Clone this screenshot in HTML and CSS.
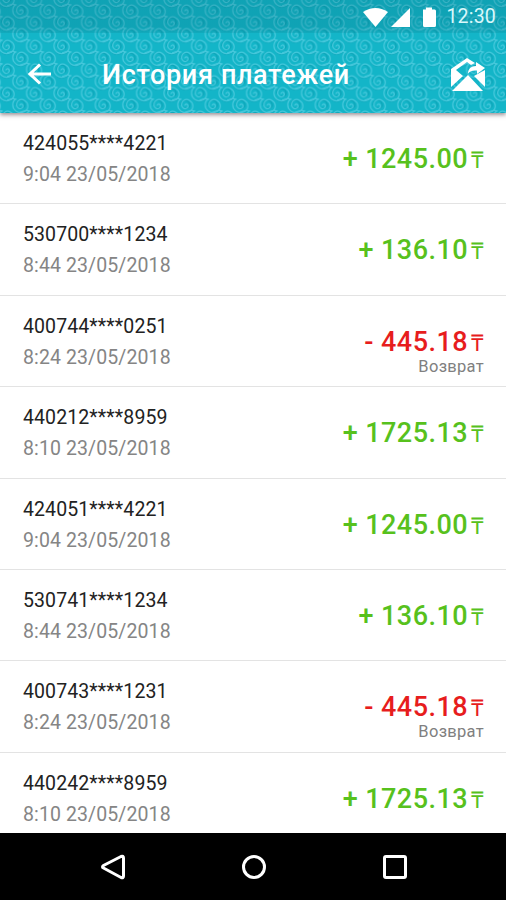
FILE: index.html
```html
<!DOCTYPE html>
<html lang="ru">
<head>
	<meta charset="UTF-8">
	<title>История платежей</title>
	<link rel="stylesheet" href="styles.css">
</head>
<body>
	<div class="phone">
		<header class="header">
			<svg class="header-pattern" width="506" height="113">
				<defs>
					<pattern id="waves" x="7" y="-1" width="27.5" height="23.6" patternUnits="userSpaceOnUse">
						<g fill="none" stroke="#0a9cb0" stroke-width="1.4">
							<path id="shade" d="M-5 0 C-5 -7 4 -6 4 0 C4 3 0 4 -1 2 M-7 4 C-4 9 2 9 7 5"/>
							<use href="#shade" x="27.5"/>
							<use href="#shade" y="23.6"/>
							<use href="#shade" x="27.5" y="23.6"/>
							<use href="#shade" x="13.75" y="11.8"/>
						</g>
						<g fill="none" stroke="#6bd6ea" stroke-width="1.2" stroke-linecap="round">
							<path id="curl" d="M-1 0 C1 -3 4 1 1 3 C-3 5 -6 0 -3 -4 C1 -8 8 -4 7 2 C6 7 -1 9 -5 6 C-9 3 -9 -4 -5 -6 C-9 -8 -12 -5 -14 -5"/>
							<use href="#curl" x="27.5"/>
							<use href="#curl" y="23.6"/>
							<use href="#curl" x="27.5" y="23.6"/>
							<use href="#curl" x="13.75" y="11.8"/>
						</g>
					</pattern>
				</defs>
				<rect width="506" height="113" fill="url(#waves)"/>
			</svg>
			<div class="status">
				<svg class="status-icons" width="76" height="22" viewBox="0 0 76 22" fill="#fff">
					<path d="M0 5 Q12.500 -3 25 5 L12.500 20Z"/>
					<path d="M47 1V20H28Z"/>
					<path d="M60 2.500H63V.5H69V2.500H71.500Q73 2.500 73 4V18.500Q73 20 71.500 20H61.500Q60 20 60 18.500Z"/>
				</svg>
				<span class="time">12:30</span>
			</div>
			<div class="toolbar">
				<svg class="back" width="24" height="22" viewBox="0 0 24 22">
					<path d="M23 11H2M12 1.500L2 11L12 20.500" fill="none" stroke="#fff" stroke-width="3"/>
				</svg>
				<h1 class="title">История платежей</h1>
				<svg class="mail" width="36" height="36" viewBox="0 0 36 36">
					<path d="M1 12L17 1L25 6L21 8L17 5L6 13L13 19L1 30Z" fill="#fff"/>
					<path d="M35 13V30L24 19Z" fill="#fff"/>
					<path d="M2 34L18 18L33 34Z" fill="#fff"/>
					<path d="M18 16.500C18 12 21 9 26 9V5L35 11L27 17V13.500C23 13 20 14 18 16.500Z" fill="#fff"/>
				</svg>
			</div>
		</header>

		<main class="list">
			<div class="item">
				<div class="info"><div class="card">424055****4221</div><div class="date">9:04 23/05/2018</div></div>
				<div class="sum plus">+ 1245.00<span class="tenge">₸</span></div>
			</div>
			<div class="item">
				<div class="info"><div class="card">530700****1234</div><div class="date">8:44 23/05/2018</div></div>
				<div class="sum plus">+ 136.10<span class="tenge">₸</span></div>
			</div>
			<div class="item">
				<div class="info"><div class="card">400744****0251</div><div class="date">8:24 23/05/2018</div></div>
				<div class="sum minus">- 445.18<span class="tenge">₸</span><div class="note">Возврат</div></div>
			</div>
			<div class="item">
				<div class="info"><div class="card">440212****8959</div><div class="date">8:10 23/05/2018</div></div>
				<div class="sum plus">+ 1725.13<span class="tenge">₸</span></div>
			</div>
			<div class="item">
				<div class="info"><div class="card">424051****4221</div><div class="date">9:04 23/05/2018</div></div>
				<div class="sum plus">+ 1245.00<span class="tenge">₸</span></div>
			</div>
			<div class="item">
				<div class="info"><div class="card">530741****1234</div><div class="date">8:44 23/05/2018</div></div>
				<div class="sum plus">+ 136.10<span class="tenge">₸</span></div>
			</div>
			<div class="item">
				<div class="info"><div class="card">400743****1231</div><div class="date">8:24 23/05/2018</div></div>
				<div class="sum minus">- 445.18<span class="tenge">₸</span><div class="note">Возврат</div></div>
			</div>
			<div class="item">
				<div class="info"><div class="card">440242****8959</div><div class="date">8:10 23/05/2018</div></div>
				<div class="sum plus">+ 1725.13<span class="tenge">₸</span></div>
			</div>
		</main>

		<nav class="navbar">
			<svg width="28" height="28" viewBox="0 0 28 28"><path d="M22 3.500Q24.500 2.500 24.500 5V23Q24.500 25.500 22 24.500L4.500 15Q2.500 14 4.500 12.500Z"/></svg>
			<svg width="28" height="28" viewBox="0 0 28 28"><circle cx="14" cy="14" r="10.500"/></svg>
			<svg width="28" height="28" viewBox="0 0 28 28"><rect x="3.500" y="3.500" width="21" height="21" rx="1.500"/></svg>
		</nav>
	</div>
</body>
</html>
```

FILE: styles.css
```css
body {
	margin: 0;
	overflow: hidden;
	background-color: #fff;
	font-family: Roboto, "Liberation Sans", sans-serif;
}

.phone {
	display: flex;
	flex-direction: column;
	width: 506px;
	height: 900px;
}

.header {
	position: relative;
	z-index: 1;
	flex: none;
	height: 113px;
	color: #fff;
	background-color: #13b5c8;
	box-shadow: 0 2px 4px rgba(60, 40, 50, .5);
}

.header-pattern {
	position: absolute;
	top: 0;
	left: 0;
	opacity: .6;
}

.status {
	position: relative;
	display: flex;
	justify-content: flex-end;
	height: 33px;
	padding-right: 10px;
	box-sizing: border-box;
	background: linear-gradient(rgba(0, 90, 105, .2) 80%, rgba(0, 90, 105, .12));
}

.status-icons {
	margin-top: 7px;
	margin-right: 7px;
}

.time {
	font-size: 19.5px;
	line-height: 34px;
	letter-spacing: .2px;
	color: #d9f8fb;
}

.toolbar {
	position: relative;
	display: flex;
	align-items: center;
	height: 80px;
	padding: 4px 20px 0 28px;
	box-sizing: border-box;
}

.back {
	margin-top: -3px;
}

.title {
	flex: 1;
	margin: 0 0 0 50px;
	font-size: 27px;
	font-weight: 500;
	letter-spacing: .65px;
	white-space: nowrap;
}

.list {
	flex: 1;
	min-height: 0;
	overflow: hidden;
}

.item {
	display: flex;
	justify-content: space-between;
	height: 91.4px;
	padding: 18px 22px 0 23px;
	box-sizing: border-box;
	border-bottom: 1.5px solid #e3e3e3;
}

.card {
	font-size: 19.5px;
	line-height: 26px;
	letter-spacing: .1px;
	color: #222;
}

.date {
	margin-top: 5px;
	font-size: 19.5px;
	line-height: 26px;
	letter-spacing: .1px;
	color: #858585;
}

.sum {
	padding-top: 12px;
	font-size: 27px;
	line-height: 32px;
	font-weight: 500;
	letter-spacing: .45px;
	text-align: right;
}

.plus {
	color: #57c11d;
}

.minus {
	color: #e71d1d;
}

.tenge {
	margin-left: 3px;
	font-size: 23px;
	font-weight: 400;
	letter-spacing: 0;
}

.note {
	margin-top: -3px;
	font-size: 16.5px;
	line-height: 19px;
	font-weight: 400;
	letter-spacing: .3px;
	color: #808080;
}

.navbar {
	display: flex;
	flex: none;
	justify-content: space-between;
	align-items: center;
	height: 67px;
	padding: 0 97px 0 99px;
	box-sizing: border-box;
	background-color: #000;
}

.navbar svg {
	fill: none;
	stroke: #fff;
	stroke-width: 3;
}
```
